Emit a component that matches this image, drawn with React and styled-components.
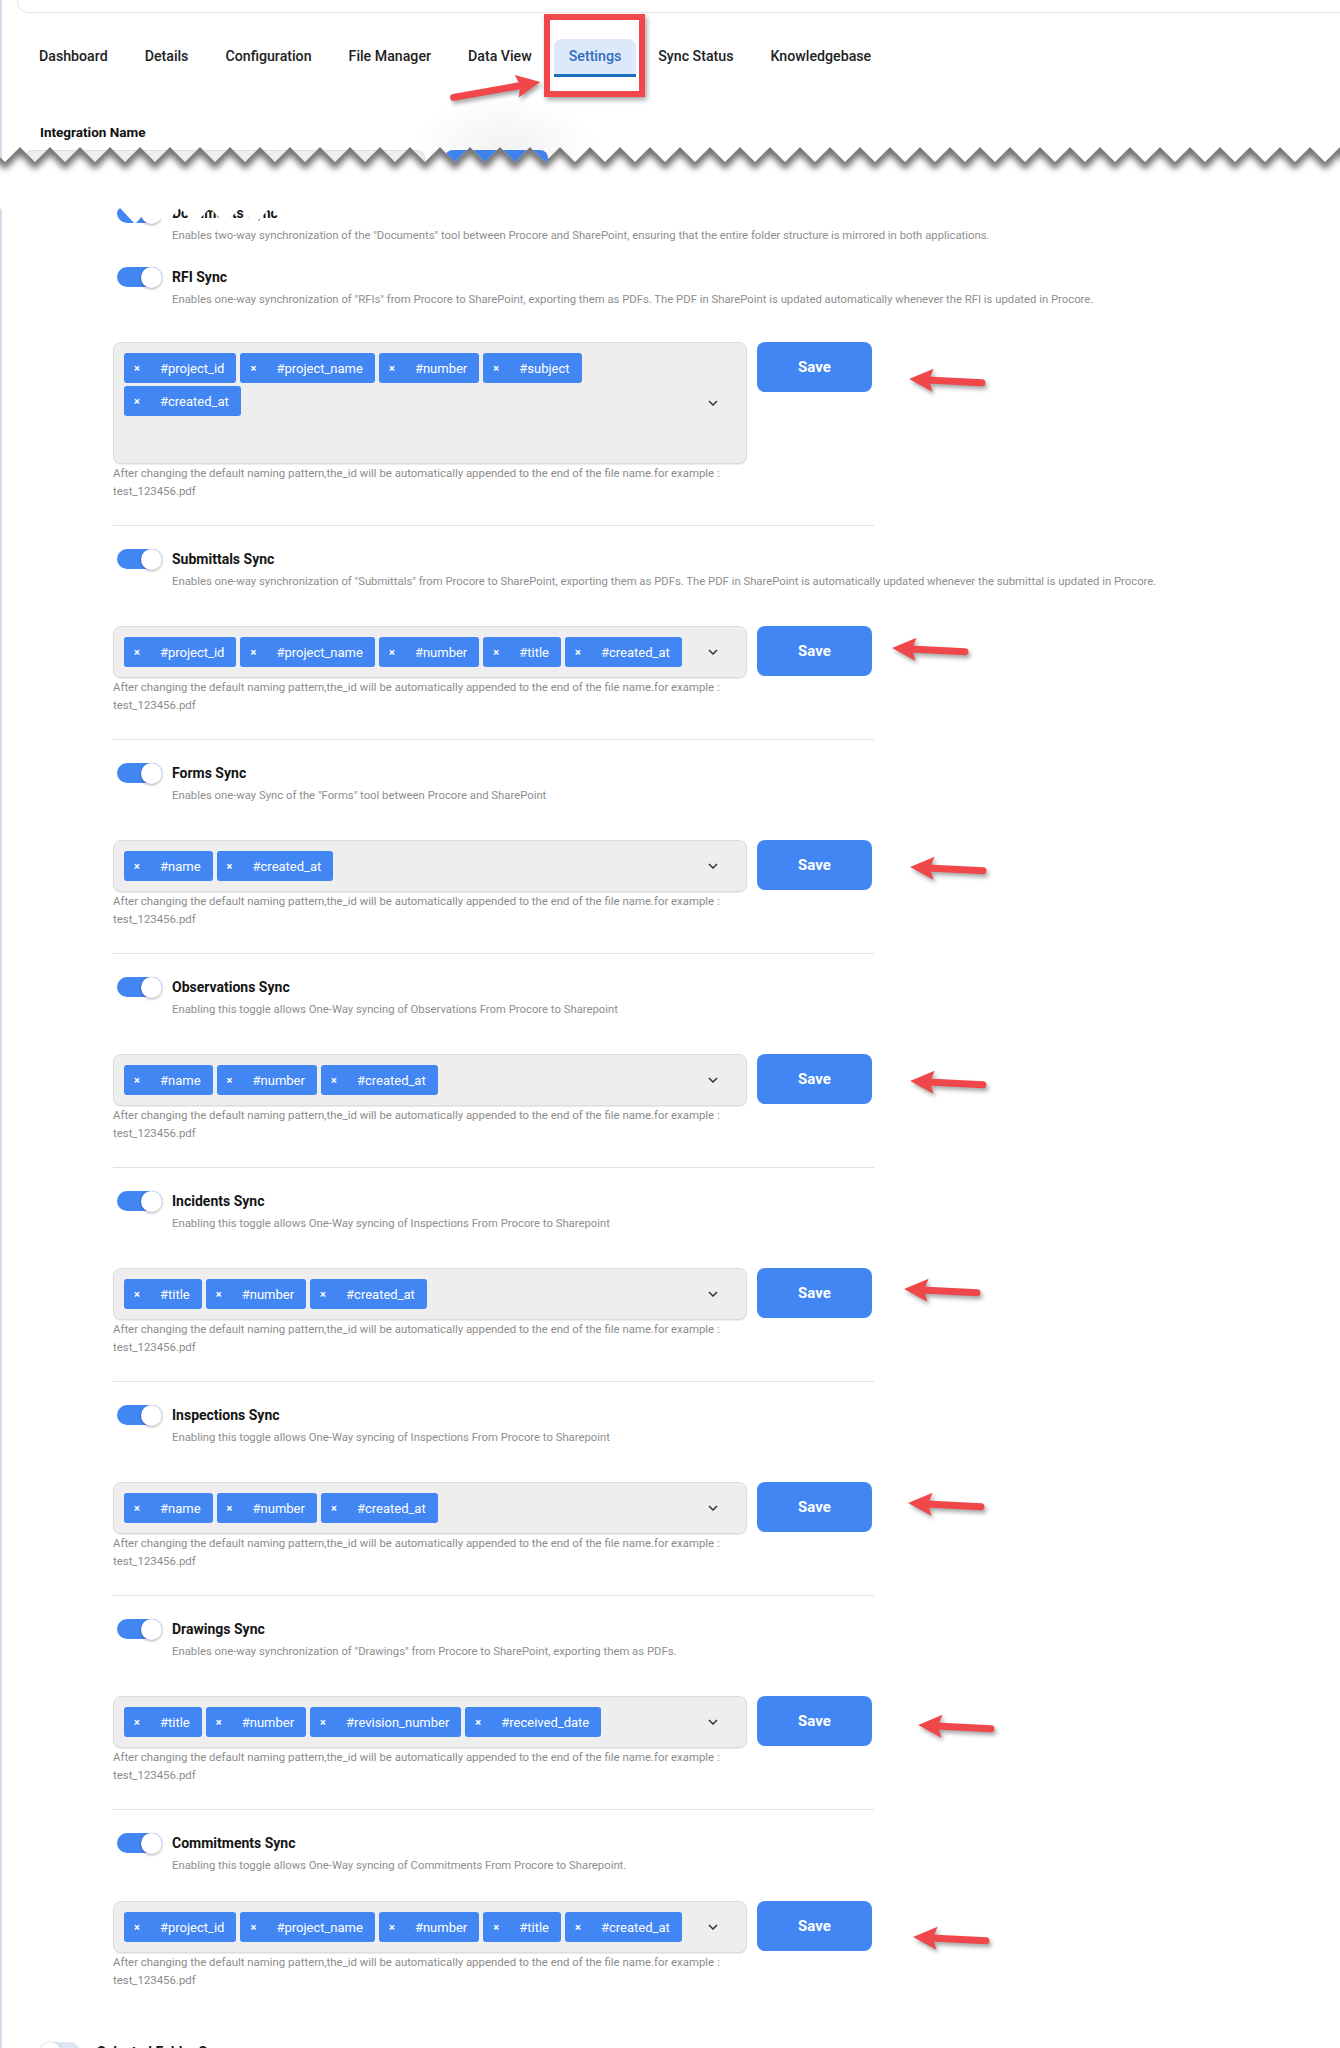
import React from "react";
import styled, { createGlobalStyle } from "styled-components";

const BLUE = "#4286f4";
const RED = "#f0474a";

const GlobalStyle = createGlobalStyle`
  body {
    margin: 0;
    background: #fff;
    font-family: Roboto, "Noto Sans", Arial, sans-serif;
    color: #1c1c1c;
  }
`;

const Page = styled.div`
  position: relative;
  min-height: 2048px;
  overflow: hidden;
  box-shadow: inset 2px 0 0 #d4dbe8;
`;

const TopCard = styled.div`
  height: 12px;
  margin: 0 -20px 0 17px;
  border: 1px solid #e4e4e4;
  border-top: none;
  border-radius: 0 0 0 12px;
`;

const TabBar = styled.nav`
  display: flex;
  gap: 7px;
  margin: 26px 0 0 24px;
`;

const Tab = styled.div`
  position: relative;
  height: 35px;
  line-height: 35px;
  padding: 0 15px;
  font-size: 14.2px;
  font-weight: 500;
  color: ${(p) => (p.$active ? "#2f6fc3" : "#222")};
  background: ${(p) => (p.$active ? "#dde8fa" : "transparent")};
  border-bottom: 3px solid ${(p) => (p.$active ? "#1b6fc1" : "transparent")};
  border-radius: 8px 8px 0 0;
`;

const RedFrame = styled.div`
  position: absolute;
  left: -10px;
  top: -25px;
  width: 101px;
  height: 83px;
  box-sizing: border-box;
  border: 6px solid ${RED};
  box-shadow: 2px 3px 5px rgba(0, 0, 0, 0.35);
  pointer-events: none;
`;

const ArrowBox = styled.div`
  position: absolute;
  left: ${(p) => p.$left};
  top: ${(p) => p.$top}px;
  line-height: 0;
  filter: drop-shadow(2px 3px 2px rgba(0, 0, 0, 0.35));
  z-index: 3;
  svg {
    display: block;
    transform: rotate(${(p) => p.$rot}deg);
  }
`;

const Arrow = ({ length = 80, left, top, rot = 3 }) => (
  <ArrowBox $left={left} $top={top} $rot={rot}>
    <svg width={length} height="30" viewBox={`0 0 ${length} 30`}>
      <line x1="20" y1="15" x2={length - 5} y2="15" stroke={RED} strokeWidth="7" strokeLinecap="round" />
      <polygon points="2,15 26,3.5 22,15 26,26.5" fill={RED} strokeLinejoin="round" />
    </svg>
  </ArrowBox>
);

const FieldLabel = styled.div`
  margin: 46px 0 0 40px;
  font-size: 13.5px;
  font-weight: 700;
  line-height: 18px;
  color: #111;
`;

const PeekRow = styled.div`
  display: flex;
  gap: 20px;
  margin: 9px 0 0 24px;
  height: 30px;
`;

const PeekInput = styled.div`
  width: 401px;
  box-sizing: border-box;
  background: #eee;
  border: 1px solid #ddd;
  border-radius: 8px;
`;

const PeekButton = styled.div`
  width: 103px;
  background: ${BLUE};
  border-radius: 8px;
`;

const Glow = styled.div`
  position: absolute;
  left: 410px;
  top: 95px;
  width: 190px;
  height: 100px;
  background: radial-gradient(ellipse at center, rgba(0, 0, 0, 0.05), rgba(0, 0, 0, 0) 70%);
  pointer-events: none;
`;

const TearLayer = styled.svg`
  position: absolute;
  left: 0;
  top: 140px;
  z-index: 5;
  display: block;
`;

const buildTear = () => {
  const top = [];
  const bottom = [];
  for (let k = -1; k <= 46; k++) {
    top.push(`${5 + 30 * k},22`, `${20 + 30 * k},7`);
  }
  for (let k = 46; k >= -1; k--) {
    bottom.push(`${15 + 30 * k},84`, `${30 * k},68`);
  }
  return { edge: top.join(" "), shape: [...top, ...bottom].join(" ") };
};

const Tear = () => {
  const { edge, shape } = buildTear();
  return (
    <TearLayer width="1340" height="90" viewBox="0 0 1340 90">
      <defs>
        <clipPath id="tearClip">
          <polygon points={shape} />
        </clipPath>
        <filter id="tearBlur" x="-5%" y="-100%" width="110%" height="300%">
          <feGaussianBlur stdDeviation="3.2" />
        </filter>
      </defs>
      <polygon points={shape} fill="#fff" />
      <g clipPath="url(#tearClip)">
        <polyline points={edge} fill="none" stroke="#505050" strokeWidth="11" opacity="0.8" filter="url(#tearBlur)" />
      </g>
    </TearLayer>
  );
};

const Sections = styled.div`
  margin-left: 113px;
  width: 761px;
`;

const Section = styled.section`
  padding: 22px 0 ${(p) => (p.$hasSelect ? 25 : 0)}px;
  border-top: ${(p) => (p.$divider ? "1px solid #e2e2e2" : "none")};
`;

const Header = styled.div`
  display: flex;
  align-items: center;
  gap: ${(p) => p.$gap || 10}px;
  height: 22px;
  margin-left: ${(p) => p.$indent ?? 4}px;
`;

const Track = styled.span`
  position: relative;
  flex: 0 0 auto;
  width: ${(p) => p.$w}px;
  height: 20px;
  border-radius: 10px;
  background: ${(p) => (p.$on ? BLUE : "#dfe6f5")};
`;

const Knob = styled.span`
  position: absolute;
  top: -0.5px;
  ${(p) => (p.$on ? "right: 0;" : "left: 0;")}
  width: 21px;
  height: 21px;
  border-radius: 50%;
  background: #fff;
  box-shadow: 0 1px 3px rgba(0, 0, 0, 0.35);
`;

const Toggle = ({ on = true, width = 45 }) => (
  <Track $on={on} $w={width}>
    <Knob $on={on} />
  </Track>
);

const Title = styled.span`
  font-size: 14px;
  font-weight: 700;
  line-height: 22px;
  color: #151515;
`;

const Desc = styled.div`
  margin: 4px 0 0 59px;
  font-size: 11.3px;
  line-height: 16px;
  color: #8e8e8e;
  white-space: nowrap;
`;

const SelectRow = styled.div`
  position: relative;
  display: flex;
  align-items: flex-start;
  gap: 10px;
  width: 759px;
  margin-top: ${(p) => p.$gap}px;
`;

const SelectBox = styled.div`
  flex: 0 0 634px;
  box-sizing: border-box;
  min-height: ${(p) => p.$minH}px;
  display: flex;
  background: #eee;
  border: 1px solid #dcdcdc;
  border-radius: 8px;
  box-shadow: 0 1px 1px rgba(0, 0, 0, 0.08);
`;

const ChipArea = styled.div`
  flex: 1;
  display: flex;
  flex-direction: column;
  gap: 3px;
  padding: 10px 0 10px 10px;
`;

const ChipRow = styled.div`
  display: flex;
  gap: 4px;
`;

const Chip = styled.span`
  display: flex;
  align-items: center;
  height: 30px;
  padding: 0 12px 0 10px;
  background: ${BLUE};
  color: #fff;
  border-radius: 3px;
  font-size: 13px;
  white-space: nowrap;
`;

const Remove = styled.span`
  width: 26px;
  font-size: 11px;
  font-weight: 700;
`;

const Indicator = styled.span`
  align-self: center;
  display: flex;
  padding: 0 28px 0 8px;
`;

const SaveButton = styled.button`
  flex: 0 0 115px;
  height: 50px;
  border: none;
  border-radius: 8px;
  background: ${BLUE};
  color: #fff;
  font-family: inherit;
  font-size: 15px;
  font-weight: 700;
`;

const Helper = styled.p`
  margin: 0;
  width: 650px;
  font-size: 11.4px;
  line-height: 18px;
  color: #8b8b8b;
`;

const Chevron = () => (
  <svg width="10" height="6" viewBox="0 0 10 6">
    <polyline points="1,1 5,5 9,1" fill="none" stroke="#333" strokeWidth="1.5" />
  </svg>
);

const FolderRow = styled.div`
  margin: 27px 0 0 40px;
`;

const tabs = ["Dashboard", "Details", "Configuration", "File Manager", "Data View", "Settings", "Sync Status", "Knowledgebase"];

const sections = [
  {
    title: "Documents Sync",
    desc: 'Enables two-way synchronization of the "Documents" tool between Procore and SharePoint, ensuring that the entire folder structure is mirrored in both applications.',
  },
  {
    title: "RFI Sync",
    desc: 'Enables one-way synchronization of "RFIs" from Procore to SharePoint, exporting them as PDFs. The PDF in SharePoint is updated automatically whenever the RFI is updated in Procore.',
    rows: [["#project_id", "#project_name", "#number", "#subject"], ["#created_at"]],
    minH: 122,
    gap: 34,
    arrow: { dx: 37, dy: 14 },
  },
  {
    title: "Submittals Sync",
    desc: 'Enables one-way synchronization of "Submittals" from Procore to SharePoint, exporting them as PDFs. The PDF in SharePoint is automatically updated whenever the submittal is updated in Procore.',
    rows: [["#project_id", "#project_name", "#number", "#title", "#created_at"]],
    divider: true,
    arrow: { dx: 20, dy: -1 },
  },
  {
    title: "Forms Sync",
    desc: 'Enables one-way Sync of the "Forms" tool between Procore and SharePoint',
    rows: [["#name", "#created_at"]],
    divider: true,
    arrow: { dx: 38, dy: 4 },
  },
  {
    title: "Observations Sync",
    desc: "Enabling this toggle allows One-Way syncing of Observations From Procore to Sharepoint",
    rows: [["#name", "#number", "#created_at"]],
    divider: true,
    arrow: { dx: 38, dy: 4 },
  },
  {
    title: "Incidents Sync",
    desc: "Enabling this toggle allows One-Way syncing of Inspections From Procore to Sharepoint",
    rows: [["#title", "#number", "#created_at"]],
    divider: true,
    arrow: { dx: 32, dy: -2 },
  },
  {
    title: "Inspections Sync",
    desc: "Enabling this toggle allows One-Way syncing of Inspections From Procore to Sharepoint",
    rows: [["#name", "#number", "#created_at"]],
    divider: true,
    arrow: { dx: 36, dy: -2 },
  },
  {
    title: "Drawings Sync",
    desc: 'Enables one-way synchronization of "Drawings" from Procore to SharePoint, exporting them as PDFs.',
    rows: [["#title", "#number", "#revision_number", "#received_date"]],
    divider: true,
    arrow: { dx: 46, dy: 6 },
  },
  {
    title: "Commitments Sync",
    desc: "Enabling this toggle allows One-Way syncing of Commitments From Procore to Sharepoint.",
    rows: [["#project_id", "#project_name", "#number", "#title", "#created_at"]],
    divider: true,
    gap: 27,
    arrow: { dx: 41, dy: 13 },
  },
];

const SyncSection = ({ title, desc, rows, minH = 52, gap = 36, divider, arrow }) => (
  <Section $divider={divider} $hasSelect={!!rows}>
    <Header>
      <Toggle />
      <Title>{title}</Title>
    </Header>
    <Desc>{desc}</Desc>
    {rows && (
      <>
        <SelectRow $gap={gap}>
          <SelectBox $minH={minH}>
            <ChipArea>
              {rows.map((row, i) => (
                <ChipRow key={i}>
                  {row.map((tag) => (
                    <Chip key={tag}>
                      <Remove>×</Remove>
                      {tag}
                    </Chip>
                  ))}
                </ChipRow>
              ))}
            </ChipArea>
            <Indicator>
              <Chevron />
            </Indicator>
          </SelectBox>
          <SaveButton>Save</SaveButton>
          <Arrow left={`calc(100% + ${arrow.dx - 2}px)`} top={10 + arrow.dy} />
        </SelectRow>
        <Helper>
          After changing the default naming pattern,the_id will be automatically appended to the end of the file name.for example :
          <br />
          test_123456.pdf
        </Helper>
      </>
    )}
  </Section>
);

const App = () => (
  <Page>
    <GlobalStyle />
    <TopCard />
    <TabBar>
      {tabs.map((t) => (
        <Tab key={t} $active={t === "Settings"}>
          {t}
          {t === "Settings" && (
            <>
              <RedFrame />
              <Arrow length={95} left="-106px" top={36} rot={170} />
            </>
          )}
        </Tab>
      ))}
    </TabBar>
    <FieldLabel>Integration Name</FieldLabel>
    <PeekRow>
      <PeekInput />
      <PeekButton />
    </PeekRow>
    <Glow />
    <Tear />
    <Sections>
      {sections.map((s) => (
        <SyncSection key={s.title} {...s} />
      ))}
    </Sections>
    <FolderRow>
      <Header $indent={0} $gap={17}>
        <Toggle on={false} width={40} />
        <Title>Selected Folder Sync</Title>
      </Header>
    </FolderRow>
  </Page>
);

export default App;
